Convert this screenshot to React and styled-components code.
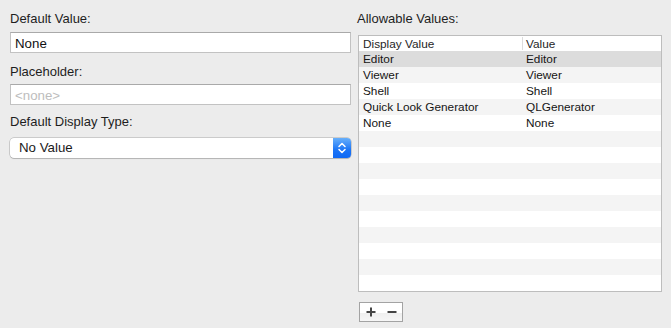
import React from "react";
import styled, { createGlobalStyle } from "styled-components";

const GlobalStyle = createGlobalStyle`
  html, body {
    margin: 0;
    padding: 0;
    background: #ececec;
  }
  body {
    font-family: "Liberation Sans", Arial, sans-serif;
    color: #1d1d1d;
  }
`;

const Page = styled.div`
  display: flex;
  gap: 6px;
  padding: 11px 9px 0 10px;
  width: 671px;
  height: 328px;
  box-sizing: border-box;
`;

const LeftColumn = styled.div`
  display: flex;
  flex-direction: column;
  width: 342px;
`;

const RightColumn = styled.div`
  display: flex;
  flex-direction: column;
  flex: 1;
`;

const Label = styled.div`
  font-size: 13px;
  line-height: 16px;
  height: 16px;
  color: #1e1e1e;
  margin-bottom: ${(p) => p.$gap}px;
  margin-top: ${(p) => p.$top || 0}px;
  white-space: nowrap;
`;

const TextBox = styled.div`
  height: 21px;
  box-sizing: border-box;
  background: #fff;
  border: 1px solid #c2c2c2;
  border-top-color: #a9a9a9;
  font-size: 13.3px;
  line-height: 20px;
  padding: 1px 0 0 4px;
  color: ${(p) => (p.$placeholder ? "#bdbdbd" : "#111")};
`;

const Select = styled.div`
  display: flex;
  height: 20px;
  margin-top: ${(p) => p.$top}px;
  background: #fff;
  border-radius: 4px;
  box-shadow: 0 0 0 0.5px rgba(0, 0, 0, 0.28), 0 1px 1px rgba(0, 0, 0, 0.12);
`;

const SelectText = styled.div`
  flex: 1;
  font-size: 13.3px;
  line-height: 20px;
  padding-left: 9px;
  color: #1a1a1a;
`;

const Stepper = styled.div`
  width: 18px;
  display: flex;
  align-items: center;
  justify-content: center;
  border-radius: 0 4px 4px 0;
  background: linear-gradient(#68b0fb, #1b74f6 60%, #0f68f4);
`;

const Table = styled.div`
  margin-left: 1px;
  margin-top: 8px;
  width: 304px;
  height: 257px;
  box-sizing: border-box;
  border: 1px solid #bdbdbd;
  background: #fff;
  display: flex;
  flex-direction: column;
  overflow: hidden;
`;

const HeaderRow = styled.div`
  display: grid;
  grid-template-columns: 163px 1fr;
  height: 15px;
  flex: none;
`;

const HeaderCell = styled.div`
  font-size: 11.8px;
  line-height: 14px;
  padding-left: ${(p) => (p.$divider ? 3 : 4)}px;
  color: #262626;
  border-left: ${(p) => (p.$divider ? "1px solid #dcdcdc" : "none")};
  margin: 1px 0 0;
  height: 13px;
`;

const Row = styled.div`
  display: grid;
  grid-template-columns: 163px 1fr;
  height: 16px;
  flex: none;
  background: ${(p) => (p.$selected ? "#dcdcdc" : p.$odd ? "#f4f4f4" : "#fff")};
`;

const Cell = styled.div`
  font-size: 11.8px;
  line-height: 16px;
  padding-left: 4px;
  color: #151515;
  white-space: nowrap;
`;

const ButtonGroup = styled.div`
  display: flex;
  margin-top: 10px;
  margin-left: 2px;
  width: 44px;
  height: 20px;
  box-sizing: border-box;
  border: 1px solid #a3a3a3;
  background: linear-gradient(#fff 55%, #efefef 56%, #f6f6f6);
`;

const SmallButton = styled.div`
  flex: 1;
  display: flex;
  align-items: center;
  justify-content: center;
`;

const rows = [
  ["Editor", "Editor"],
  ["Viewer", "Viewer"],
  ["Shell", "Shell"],
  ["Quick Look Generator", "QLGenerator"],
  ["None", "None"],
];

const App = () => {
  const allRows = [...rows];
  while (allRows.length < 15) allRows.push(["", ""]);

  return (
    <>
      <GlobalStyle />
      <Page>
        <LeftColumn>
          <Label $gap={5}>Default Value:</Label>
          <TextBox>None</TextBox>
          <Label $top={11} $gap={4}>Placeholder:</Label>
          <TextBox $placeholder>&lt;none&gt;</TextBox>
          <Label $top={9} $gap={0}>Default Display Type:</Label>
          <Select $top={8}>
            <SelectText>No Value</SelectText>
            <Stepper>
              <svg width="10" height="14" viewBox="0 0 10 14">
                <path
                  d="M2 5.5 L5 2.5 L8 5.5 M2 8.5 L5 11.5 L8 8.5"
                  fill="none"
                  stroke="#fff"
                  strokeWidth="1.5"
                  strokeLinecap="round"
                  strokeLinejoin="round"
                />
              </svg>
            </Stepper>
          </Select>
        </LeftColumn>
        <RightColumn>
          <Label $gap={0}>Allowable Values:</Label>
          <Table>
            <HeaderRow>
              <HeaderCell>Display Value</HeaderCell>
              <HeaderCell $divider>Value</HeaderCell>
            </HeaderRow>
            {allRows.map(([display, value], i) => (
              <Row key={i} $odd={i % 2 === 1} $selected={i === 0}>
                <Cell>{display}</Cell>
                <Cell>{value}</Cell>
              </Row>
            ))}
          </Table>
          <ButtonGroup>
            <SmallButton>
              <svg width="10" height="10" viewBox="0 0 10 10">
                <path d="M5 0.5 V9.5 M0.5 5 H9.5" stroke="#454545" strokeWidth="2" />
              </svg>
            </SmallButton>
            <SmallButton>
              <svg width="10" height="10" viewBox="0 0 10 10">
                <path d="M0.5 5 H9.5" stroke="#454545" strokeWidth="2" />
              </svg>
            </SmallButton>
          </ButtonGroup>
        </RightColumn>
      </Page>
    </>
  );
};

export default App;
